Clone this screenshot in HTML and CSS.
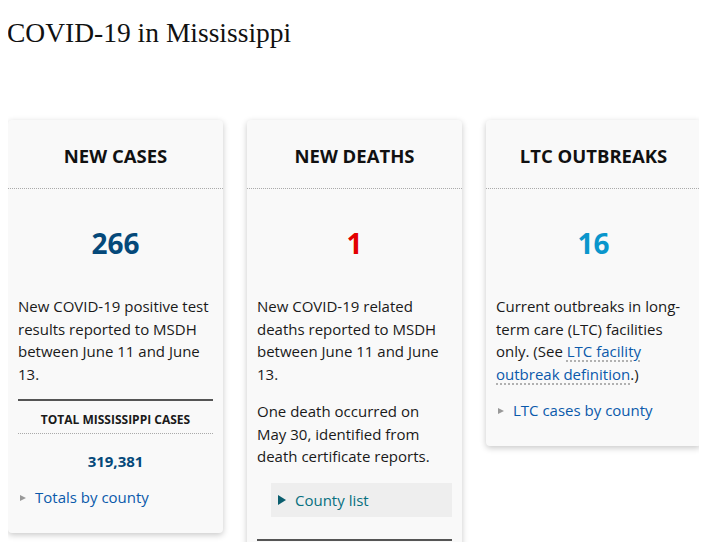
FILE: index.html
```html
<!DOCTYPE html>
<html lang="en">
<head>
<meta charset="utf-8">
<title>COVID-19 in Mississippi</title>
<link rel="stylesheet" href="styles.css">
</head>
<body>
<h1 class="page-title">COVID-19 in Mississippi</h1>
<div class="cards">
  <section class="card">
    <h2 class="card-title">NEW CASES</h2>
    <div class="card-body">
      <p class="big-num num-blue">266</p>
      <p class="desc">New COVID-19 positive test results reported to MSDH between June 11 and June 13.</p>
      <div class="total">
        <h3 class="total-title">TOTAL MISSISSIPPI CASES</h3>
        <p class="total-num">319,381</p>
      </div>
      <div class="more"><span class="tri"></span><a href="#" class="link">Totals by county</a></div>
    </div>
  </section>
  <section class="card">
    <h2 class="card-title">NEW DEATHS</h2>
    <div class="card-body">
      <p class="big-num num-red">1</p>
      <p class="desc">New COVID-19 related deaths reported to MSDH between June 11 and June 13.</p>
      <p class="desc">One death occurred on May 30, identified from death certificate reports.</p>
      <div class="county-box"><span class="tri-teal"></span><span class="county-text">County list</span></div>
      <div class="rule-bottom"></div>
    </div>
  </section>
  <section class="card">
    <h2 class="card-title">LTC OUTBREAKS</h2>
    <div class="card-body">
      <p class="big-num num-light">16</p>
      <p class="desc">Current outbreaks in long-term care (LTC) facilities only. (See <a href="#" class="link dotted">LTC facility outbreak definition</a>.)</p>
      <div class="more"><span class="tri"></span><a href="#" class="link">LTC cases by county</a></div>
    </div>
  </section>
</div>
</body>
</html>
```

FILE: styles.css
```css
html, body {
  background: #fff;
}
body {
  margin: 8px;
  font-family: "Open Sans", "Noto Sans", sans-serif;
  color: #1a1a1a;
}
.page-title {
  margin: 7px 0 0 -1px;
  font-family: "Liberation Serif", serif;
  font-weight: normal;
  font-size: 27.5px;
  line-height: 36px;
  color: #111;
}
.cards {
  margin-top: 69px;
  display: grid;
  grid-template-columns: repeat(3, 215px);
  column-gap: 24px;
  align-items: start;
}
.card {
  background: #f9f9f9;
  border-radius: 4px;
  box-shadow: 0 2px 6px rgba(0, 0, 0, 0.22);
}
.card-title {
  margin: 0;
  padding: 24px 0 20px;
  line-height: 24px;
  font-size: 18.5px;
  font-weight: 700;
  text-align: center;
  color: #111;
  border-bottom: 1px dotted #aaa;
}
.card-body {
  padding: 0 10px 25px;
}
.big-num {
  margin: 36px 0 0;
  font-size: 28px;
  line-height: 36px;
  font-weight: 700;
  text-align: center;
}
.num-blue { color: #05497a; }
.num-red { color: #e30000; }
.num-light { color: #0a96cc; }
.desc {
  margin: 34px 0 0;
  font-size: 15px;
  line-height: 22.5px;
}
.desc + .desc {
  margin-top: 15px;
}
.total {
  margin-top: 14px;
  border-top: 2px solid #555;
}
.total-title {
  margin: 10px 0 0;
  padding-bottom: 4px;
  font-size: 12px;
  line-height: 18px;
  font-weight: 700;
  text-align: center;
  border-bottom: 1px dotted #aaa;
}
.total-num {
  margin: 16px 0 0;
  font-size: 15px;
  line-height: 22px;
  font-weight: 700;
  text-align: center;
  color: #05497a;
}
.more {
  margin-top: 14px;
  display: flex;
  align-items: center;
  font-size: 15px;
  line-height: 22px;
}
.tri {
  width: 0;
  height: 0;
  margin: 2px 9px 0 2px;
  border-left: 6px solid #999;
  border-top: 3.5px solid transparent;
  border-bottom: 3.5px solid transparent;
}
.link {
  color: #0b5aab;
  text-decoration: none;
}
.dotted {
  text-decoration: underline dotted #999;
  text-underline-offset: 4px;
}
.county-box {
  margin: 15px 0 0 14px;
  height: 34px;
  display: flex;
  align-items: center;
  padding-left: 7px;
  background: #eee;
  font-size: 15px;
}
.tri-teal {
  width: 0;
  height: 0;
  margin-right: 9px;
  border-left: 8px solid #0a5e6e;
  border-top: 5px solid transparent;
  border-bottom: 5px solid transparent;
}
.county-text {
  color: #08707f;
}
.rule-bottom {
  margin-top: 22px;
  border-top: 2px solid #555;
}
```
